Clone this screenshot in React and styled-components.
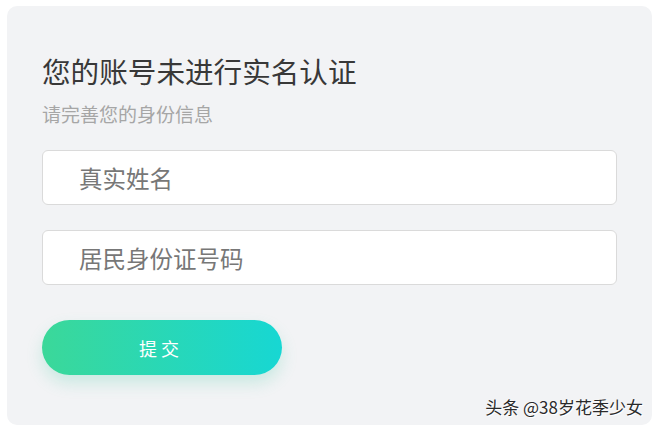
import React from "react";
import styled, { createGlobalStyle } from "styled-components";

const Global = createGlobalStyle`
  html, body { margin: 0; padding: 0; background: #ffffff; }
  body { font-family: "Noto Sans CJK SC", "Noto Sans", sans-serif; }
  * { box-sizing: border-box; }
`;

const Page = styled.div`
  width: 656px;
  height: 429px;
  padding: 6px 4px 4px 7px;
`;

const Card = styled.div`
  position: relative;
  width: 645px;
  height: 419px;
  background: #f2f3f5;
  border-radius: 10px;
  padding: 46px 35px 0 35px;
  display: flex;
  flex-direction: column;
  align-items: flex-start;
`;

const Title = styled.h1`
  margin: 0;
  font-size: 28.6px;
  line-height: 38px;
  font-weight: 400;
  color: #383838;
`;

const Subtitle = styled.p`
  margin: 11px 0 0 0;
  font-size: 19px;
  line-height: 26px;
  color: #a6a6a6;
`;

const Form = styled.form`
  width: 100%;
  display: flex;
  flex-direction: column;
  gap: 25px;
  margin-top: 23px;
`;

const Field = styled.input`
  width: 100%;
  height: 55px;
  border: 1px solid #dadada;
  border-radius: 6px;
  background: #ffffff;
  padding: 0 0 0 36px;
  font-family: "Noto Sans CJK SC", sans-serif;
  font-size: 23.5px;
  color: #333;
  outline: none;
  &::placeholder { color: #777777; }
`;

const Submit = styled.button`
  margin-top: 35px;
  width: 240px;
  height: 55px;
  border: none;
  border-radius: 28px;
  background: linear-gradient(90deg, #3bd899 0%, #17d7d3 100%);
  box-shadow: 0 8px 16px rgba(60, 200, 160, 0.22);
  color: #ffffff;
  font-family: "Noto Sans CJK SC", sans-serif;
  font-size: 18px;
  letter-spacing: 4px;
  padding-left: 4px;
  cursor: pointer;
`;

const Watermark = styled.div`
  position: absolute;
  right: 9px;
  bottom: 7px;
  font-size: 17px;
  line-height: 22px;
  color: #2a2a2a;
  text-shadow: 0 0 2px #fff, 1px 1px 0 #fff;
`;

export default function App() {
  return (
    <Page>
      <Global />
      <Card>
        <Title>您的账号未进行实名认证</Title>
        <Subtitle>请完善您的身份信息</Subtitle>
        <Form onSubmit={(e) => e.preventDefault()}>
          <Field placeholder="真实姓名" />
          <Field placeholder="居民身份证号码" />
        </Form>
        <Submit type="button">提交</Submit>
        <Watermark>头条 @38岁花季少女</Watermark>
      </Card>
    </Page>
  );
}
